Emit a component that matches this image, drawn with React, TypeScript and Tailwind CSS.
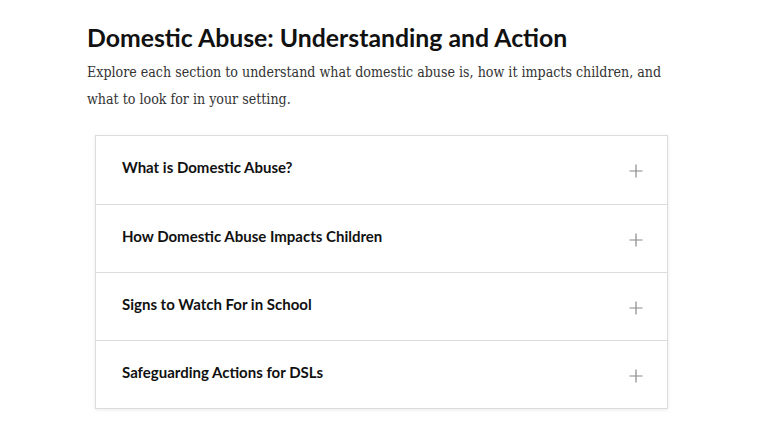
import React from "react";

const items = [
  "What is Domestic Abuse?",
  "How Domestic Abuse Impacts Children",
  "Signs to Watch For in School",
  "Safeguarding Actions for DSLs",
];

export default function App() {
  return (
    <div className="min-h-[424px] w-[768px] bg-white">
      <div className="ml-[87px] w-[589px] pt-[22px]">
        <h1
          className="text-[24.8px] font-bold leading-[32px] text-[#111]"
          style={{ fontFamily: "Lato, 'Noto Sans', sans-serif" }}
        >
          Domestic Abuse: Understanding and Action
        </h1>
        <p
          className="mt-[5px] text-[14.1px] leading-[27px] text-[#333] font-stretch-condensed"
          style={{ fontFamily: "'DejaVu Serif Condensed', 'DejaVu Serif', serif" }}
        >
          Explore each section to understand what domestic abuse is, how it impacts children, and what to look for in your setting.
        </p>
        <div className="mx-2 mt-[22px] border border-[#dcdcdc] bg-white shadow-[0_1px_4px_rgba(0,0,0,0.08)]">
          {items.map((t, i) => (
            <div
              key={t}
              className={`flex h-[68px] items-center justify-between pl-[26px] pr-[24px] ${i > 0 ? "border-t border-[#dcdcdc]" : ""}`}
            >
              <span
                className="mb-[5px] text-[15px] font-bold text-[#111]"
                style={{ fontFamily: "Lato, 'Noto Sans', sans-serif" }}
              >
                {t}
              </span>
              <svg width="14" height="14" viewBox="0 0 14 14" className="mt-[2px]">
                <path d="M7 0.5V13.5M0.5 7H13.5" stroke="#8a8a8a" strokeWidth="1.2" />
              </svg>
            </div>
          ))}
        </div>
      </div>
    </div>
  );
}
